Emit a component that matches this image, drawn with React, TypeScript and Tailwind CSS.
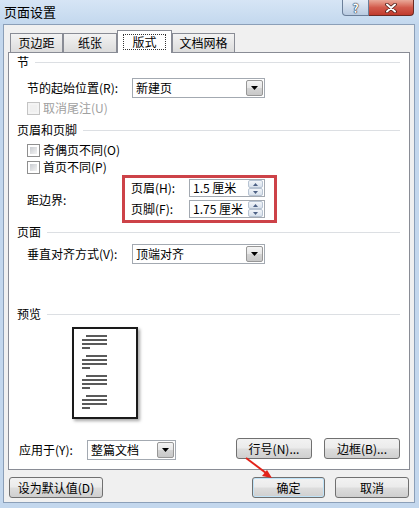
import React from 'react';

const btnBg = 'bg-[linear-gradient(#f2f2f2_0%,#ebebeb_48%,#dddddd_52%,#cfcfcf_100%)]';

const Section = ({ title, className = '' }: { title: string; className?: string }) => (
  <div className={`flex items-center h-[18px] pl-[8px] pr-[9px] ${className}`}>
    <span>{title}</span>
    <div className="flex-1 h-px bg-[#dcdfe3] ml-[6px]" />
  </div>
);

const Combo = ({ text, w }: { text: string; w: string }) => (
  <div className={`flex items-center h-[20px] border border-[#a3a9b1] bg-white ${w}`}>
    <span className="flex-1 pl-[3px] leading-none">{text}</span>
    <div className="w-[17px] h-[16px] mr-[1px] flex items-center justify-center rounded-[2px] border border-[#979797] bg-[linear-gradient(#f4f4f4_0%,#e6e6e6_50%,#d4d4d4_51%,#c8c8c8_100%)]">
      <svg width="7" height="4" viewBox="0 0 7 4">
        <path d="M0 0h7L3.5 4z" fill="#000" />
      </svg>
    </div>
  </div>
);

const Check = ({ label, disabled = false }: { label: string; disabled?: boolean }) => (
  <div className="flex items-center h-[16px] pl-[18px]">
    <div
      className={`w-[13px] h-[13px] border p-[2px] ${
        disabled ? 'border-[#c4c4c4] bg-[#f4f4f4]' : 'border-[#8f8f8f] bg-white'
      }`}
    >
      <div
        className={`w-full h-full ${
          disabled ? 'bg-[#f0f0f0]' : 'bg-gradient-to-br from-[#c9ccd1] to-[#f3f3f3]'
        }`}
      />
    </div>
    <span className={`ml-[3px] ${disabled ? 'text-[#a0a0a0]' : ''}`}>{label}</span>
  </div>
);

const SpinBtn = ({ up }: { up: boolean }) => (
  <div className="h-[8px] flex items-center justify-center rounded-[2px] border border-[#b7c3d2] bg-gradient-to-b from-[#f2f5f9] to-[#d8e1ec]">
    <svg width="5" height="3" viewBox="0 0 5 3">
      <path d={up ? 'M0 3h5L2.5 0z' : 'M0 0h5L2.5 3z'} fill="#4d6185" />
    </svg>
  </div>
);

const Spin = ({ label, value }: { label: string; value: string }) => (
  <div className="flex items-center h-[18px]">
    <span className="w-[58px]">{label}</span>
    <div className="flex items-center w-[76px] h-[18px] border border-[#a3a9b1] bg-white">
      <span className="flex-1 pl-[3px] leading-none">{value}</span>
      <div className="flex flex-col w-[15px] mr-[1px]">
        <SpinBtn up />
        <SpinBtn up={false} />
      </div>
    </div>
  </div>
);

const Btn = ({ children, className = '' }: { children: React.ReactNode; className?: string }) => (
  <div
    className={`flex items-center justify-center h-[21px] rounded-[3px] border border-[#707070] ${btnBg} ${className}`}
  >
    {children}
  </div>
);

const Tab = ({ label, w, active = false }: { label: string; w: string; active?: boolean }) =>
  active ? (
    <div
      className={`relative z-10 h-[23px] -mb-px flex items-center justify-center bg-white border border-b-0 border-[#898c95] ${w}`}
    >
      <span className="px-[8px] py-[1px] border border-dotted border-[#333]">{label}</span>
    </div>
  ) : (
    <div
      className={`h-[19px] flex items-center justify-center border border-b-0 border-[#898c95] bg-gradient-to-b from-[#f3f3f3] to-[#dcdcdc] ${w}`}
    >
      {label}
    </div>
  );

const PreviewPage = () => {
  const groups = [7, 27, 47, 67];
  return (
    <div className="ml-[63px] w-[66px] h-[92px] border-2 border-[#1a1a1a] bg-white shadow-[2px_2px_3px_rgba(0,0,0,0.35)]">
      <svg width="62" height="88" viewBox="0 0 62 88">
        {groups.map((y) => (
          <g key={y} stroke="#000" strokeWidth="1.3">
            <line x1="12" y1={y} x2="33" y2={y} />
            <line x1="8" y1={y + 4} x2="33" y2={y + 4} />
            <line x1="8" y1={y + 8} x2="33" y2={y + 8} />
            <line x1="8" y1={y + 12} x2="16" y2={y + 12} />
          </g>
        ))}
      </svg>
    </div>
  );
};

export default function App() {
  return (
    <div className="relative w-[419px] h-[508px] flex flex-col bg-[#c3d7ed] text-[12px] text-black font-['Noto_Sans_CJK_SC',sans-serif] leading-none overflow-hidden">
      {/* title bar */}
      <div className="h-[24px] flex items-start bg-gradient-to-b from-[#d6e5f5] to-[#c3d8ee]">
        <span className="pl-[4px] pt-[5px] text-[13px]">页面设置</span>
        <div className="ml-auto mr-[5px] flex">
          <div className="w-[27px] h-[16px] flex items-center justify-center rounded-bl-[4px] border border-t-0 border-[#6b7f99] bg-gradient-to-b from-[#e4ecf6] to-[#b9cbe1] text-white font-bold text-[12px] [text-shadow:0_0_1px_#1c2a3e,0_0_1px_#1c2a3e,0_0_1px_#1c2a3e]">
            ?
          </div>
          <div className="w-[45px] h-[16px] flex items-center justify-center rounded-br-[4px] border border-l-0 border-t-0 border-[#6b2a22] bg-gradient-to-b from-[#e9a899] via-[#d25a4c] to-[#c03a2c]">
            <svg width="12" height="10" viewBox="0 0 12 10">
              <path d="M2 1.5l8 7M10 1.5l-8 7" stroke="#4a1a14" strokeWidth="3.6" strokeLinecap="round" />
              <path d="M2 1.5l8 7M10 1.5l-8 7" stroke="#fff" strokeWidth="2" strokeLinecap="round" />
            </svg>
          </div>
        </div>
      </div>

      {/* dialog body */}
      <div className="flex-1 ml-[3px] mr-[4px] mb-[5px] flex flex-col bg-[#f0f0f0] border border-[#8b9fb8]">
        {/* tabs */}
        <div className="mt-[5px] ml-[6px] flex items-end h-[22px]">
          <Tab label="页边距" w="w-[53px]" />
          <Tab label="纸张" w="w-[54px]" />
          <Tab label="版式" w="w-[55px]" active />
          <Tab label="文档网格" w="w-[63px]" />
        </div>

        {/* panel */}
        <div className="mx-[4px] flex flex-col bg-white border border-[#898c95] pb-[9px]">
          <Section title="节" />
          <div className="mt-[7px] flex items-center pl-[18px]">
            <span className="w-[105px]">节的起始位置(R):</span>
            <Combo text="新建页" w="w-[133px]" />
          </div>
          <div className="mt-[2px]">
            <Check label="取消尾注(U)" disabled />
          </div>

          <Section title="页眉和页脚" className="mt-[5px]" />
          <div className="mt-[3px]">
            <Check label="奇偶页不同(O)" />
          </div>
          <div className="mt-[1px]">
            <Check label="首页不同(P)" />
          </div>
          <div className="flex items-center h-[48px] pl-[18px]">
            <span className="w-[95px] pt-[2px]">距边界:</span>
            <div className="w-[155px] h-[48px] border-[3px] border-[#cd4248] pl-[6px] pt-[1px] flex flex-col gap-[3px]">
              <Spin label="页眉(H):" value="1.5 厘米" />
              <Spin label="页脚(F):" value="1.75 厘米" />
            </div>
          </div>

          <Section title="页面" />
          <div className="mt-[3px] flex items-center pl-[18px]">
            <span className="w-[105px]">垂直对齐方式(V):</span>
            <Combo text="顶端对齐" w="w-[133px]" />
          </div>

          <Section title="预览" className="mt-[41px]" />
          <div className="mt-[4px]">
            <PreviewPage />
          </div>

          <div className="mt-[19px] h-[22px] flex items-start pl-[10px] pr-[9px]">
            <span className="w-[68px] self-center pt-[1px]">应用于(Y):</span>
            <div className="mt-[2px]">
              <Combo text="整篇文档" w="w-[89px]" />
            </div>
            <Btn className="ml-auto w-[76px]">行号(N)...</Btn>
            <Btn className="ml-[12px] w-[76px]">边框(B)...</Btn>
          </div>
        </div>

        {/* dialog buttons */}
        <div className="mt-[7px] flex items-center px-[5px]">
          <Btn className="w-[94px]">设为默认值(D)</Btn>
          <Btn className="ml-auto w-[73px] border-[#3c7fb1] shadow-[inset_0_0_0_1px_#bfe3f8]">确定</Btn>
          <Btn className="ml-[10px] w-[74px]">取消</Btn>
        </div>
      </div>

      {/* red annotation arrow */}
      <svg className="absolute left-0 top-0 pointer-events-none" width="419" height="508">
        <line x1="246" y1="458" x2="266" y2="473" stroke="#e2231a" strokeWidth="2" />
        <path d="M272 478l-10-2 5-6z" fill="#e2231a" />
      </svg>
    </div>
  );
}
